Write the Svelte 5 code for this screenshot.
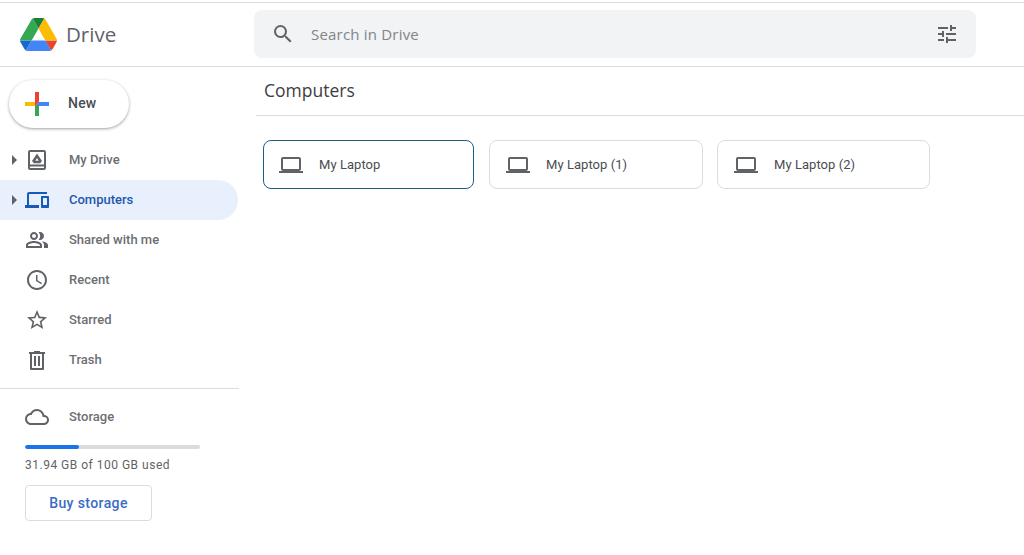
<script>
  const nav = [
    { label: 'My Drive', icon: 'drive', caret: true },
    { label: 'Computers', icon: 'computers', caret: true, active: true },
    { label: 'Shared with me', icon: 'shared' },
    { label: 'Recent', icon: 'recent' },
    { label: 'Starred', icon: 'starred' },
    { label: 'Trash', icon: 'trash' }
  ];
  const computers = ['My Laptop', 'My Laptop (1)', 'My Laptop (2)'];
</script>

<div class="page">
  <header class="header">
    <div class="brand">
      <svg class="logo" viewBox="0 0 87.3 78" width="37" height="33" aria-hidden="true">
        <path d="M6.6 66.85l3.85 6.65c.8 1.4 1.95 2.5 3.3 3.3L27.5 53H0c0 1.55.4 3.1 1.2 4.5z" fill="#1967d2"/>
        <path d="M43.65 25L29.9 1.2c-1.35.8-2.5 1.9-3.3 3.3L1.2 48.5C.4 49.9 0 51.45 0 53h27.5z" fill="#34a853"/>
        <path d="M73.55 76.8c1.35-.8 2.5-1.9 3.3-3.3l1.6-2.75 7.65-13.25c.8-1.4 1.2-2.95 1.2-4.5H59.8l5.85 11.5z" fill="#ea4335"/>
        <path d="M43.65 25L57.4 1.2C56.05.4 54.5 0 52.9 0H34.4c-1.6 0-3.15.45-4.5 1.2z" fill="#188038"/>
        <path d="M59.8 53H27.5L13.75 76.8c1.35.8 2.9 1.2 4.5 1.2h50.8c1.6 0 3.15-.45 4.5-1.2z" fill="#4285f4"/>
        <path d="M73.4 26.5L60.7 4.5c-.8-1.4-1.95-2.5-3.3-3.3L43.65 25 59.8 53h27.45c0-1.55-.4-3.1-1.2-4.5z" fill="#fbbc04"/>
      </svg>
      <span class="wordmark">Drive</span>
    </div>
    <div class="search">
      <svg class="search-icon" viewBox="0 0 24 24" width="24" height="24" aria-hidden="true">
        <path d="M15.5 14h-.79l-.28-.27A6.47 6.47 0 0 0 16 9.5 6.5 6.5 0 1 0 9.5 16c1.61 0 3.09-.59 4.23-1.57l.27.28v.79l5 4.99L20.49 19l-4.99-5zm-6 0C7.01 14 5 11.99 5 9.5S7.01 5 9.5 5 14 7.01 14 9.5 11.99 14 9.5 14z"/>
      </svg>
      <span class="placeholder">Search in Drive</span>
      <svg class="tune-icon" viewBox="0 0 24 24" width="24" height="24" aria-hidden="true">
        <path d="M3 17v2h6v-2H3zM3 5v2h10V5H3zm10 16v-2h8v-2h-8v-2h-2v6h2zM7 9v2H3v2h4v2h2V9H7zm14 4v-2H11v2h10zm-6-4h2V7h4V5h-4V3h-2v6z"/>
      </svg>
    </div>
  </header>

  <div class="body">
    <aside class="sidebar">
      <button class="new">
        <svg viewBox="0 0 36 36" width="36" height="36" aria-hidden="true">
          <path fill="#34a853" d="M16 16v14h4V20z"/>
          <path fill="#4285f4" d="M30 16H20l-4 4h14z"/>
          <path fill="#fbbc05" d="M6 16v4h10l4-4z"/>
          <path fill="#ea4335" d="M20 16V6h-4v14z"/>
        </svg>
        <span>New</span>
      </button>

      <nav class="nav">
        {#each nav as item}
          <div class="row" class:active={item.active}>
            <span class="caret" class:show={item.caret}></span>
            <svg class="nav-icon" viewBox="0 0 24 24" width="24" height="24" aria-hidden="true">
              {#if item.icon === 'drive'}
                <path d="M19 2H5a2 2 0 0 0-2 2v16a2 2 0 0 0 2 2h14a2 2 0 0 0 2-2V4a2 2 0 0 0-2-2zm0 18H5v-1.500h14V20zm0-3.500H5V4h14v12.500z"/>
                <path fill-rule="evenodd" d="M12 5.500 7 13l1.800 2.200h6.400L17 13 12 5.500zm0 4.500 1.600 2.800h-3.200L12 10z"/>
              {:else if item.icon === 'computers'}
                <path d="M4 6h18V4H4c-1.100 0-2 .9-2 2v11H0v3h14v-3H4V6zm19 2h-6c-.55 0-1 .45-1 1v10c0 .55.45 1 1 1h6c.55 0 1-.45 1-1V9c0-.55-.45-1-1-1zm-1 9h-4v-7h4v7z"/>
              {:else if item.icon === 'shared'}
                <path d="M16.670 13.130C18.040 14.060 19 15.320 19 17v3h4v-3c0-2.180-3.570-3.470-6.330-3.870zM15 12c2.210 0 4-1.790 4-4s-1.790-4-4-4c-.47 0-.91.1-1.330.24a5.980 5.980 0 0 1 0 7.520c.42.14.86.24 1.330.24zM9 12c2.210 0 4-1.790 4-4s-1.790-4-4-4-4 1.790-4 4 1.790 4 4 4zm0-6c1.100 0 2 .9 2 2s-.9 2-2 2-2-.9-2-2 .9-2 2-2zM9 13c-2.670 0-8 1.340-8 4v3h16v-3c0-2.660-5.330-4-8-4zm6 5H3v-.99C3.200 16.290 6.300 15 9 15s5.800 1.290 6 2v1z"/>
              {:else if item.icon === 'recent'}
                <path d="M11.990 2C6.470 2 2 6.480 2 12s4.470 10 9.990 10C17.520 22 22 17.520 22 12S17.520 2 11.990 2zM12 20c-4.420 0-8-3.580-8-8s3.580-8 8-8 8 3.580 8 8-3.580 8-8 8zm.5-13H11v6l5.250 3.150.75-1.230-4.500-2.670z"/>
              {:else if item.icon === 'starred'}
                <path d="M22 9.240l-7.190-.62L12 2 9.190 8.630 2 9.240l5.460 4.730L5.820 21 12 17.270 18.180 21l-1.630-7.030L22 9.240zM12 15.400l-3.760 2.270 1-4.280-3.320-2.880 4.380-.38L12 6.100l1.710 4.040 4.380.38-3.320 2.880 1 4.280L12 15.400z"/>
              {:else}
                <path d="M15 4V3H9v1H4v2h1v15a1 1 0 0 0 1 1h12a1 1 0 0 0 1-1V6h1V4h-5zm2 16H7V6h10v14zM9 8h2v10H9V8zm4 0h2v10h-2V8z"/>
              {/if}
            </svg>
            <span class="label">{item.label}</span>
          </div>
        {/each}
      </nav>

      <div class="divider"></div>

      <div class="storage">
        <div class="storage-head">
          <svg class="nav-icon" viewBox="0 0 24 24" width="24" height="24" aria-hidden="true">
            <path d="M19.350 10.040A7.490 7.490 0 0 0 12 4C9.110 4 6.600 5.640 5.350 8.040A5.994 5.994 0 0 0 0 14c0 3.310 2.690 6 6 6h13c2.760 0 5-2.240 5-5 0-2.640-2.050-4.780-4.650-4.960zM19 18H6c-2.210 0-4-1.790-4-4 0-2.050 1.530-3.760 3.560-3.970l1.070-.11.5-.95A5.469 5.469 0 0 1 12 6c2.620 0 4.880 1.860 5.390 4.430l.3 1.500 1.530.11A2.980 2.980 0 0 1 22 15c0 1.650-1.350 3-3 3z"/>
          </svg>
          <span class="label">Storage</span>
        </div>
        <div class="bar"><div class="fill" style="width: 31%"></div></div>
        <div class="used">31.94 GB of 100 GB used</div>
        <button class="buy">Buy storage</button>
      </div>
    </aside>

    <main class="main">
      <h1 class="title">Computers</h1>
      <div class="cards">
        {#each computers as name, i}
          <div class="card" class:selected={i === 0}>
            <svg viewBox="0 0 24 24" width="24" height="24" aria-hidden="true">
              <path d="M20 18c1.100 0 2-.9 2-2V6c0-1.100-.9-2-2-2H4c-1.100 0-2 .9-2 2v10c0 1.100.9 2 2 2H0v2h24v-2h-4zM4 6h16v10H4V6z"/>
            </svg>
            <span>{name}</span>
          </div>
        {/each}
      </div>
    </main>
  </div>
</div>

<style>
  :global(body) {
    margin: 0;
    background: #fff;
  }
  .page {
    height: 555px;
    width: 1024px;
    overflow: hidden;
    display: flex;
    flex-direction: column;
    padding-top: 2px;
    box-sizing: border-box;
    font-family: Roboto, "Liberation Sans", sans-serif;
    color: #5f6368;
  }
  .header {
    flex: none;
    height: 65px;
    display: flex;
    align-items: center;
    border-top: 1px solid #dadce0;
    border-bottom: 1px solid #dadce0;
    box-sizing: border-box;
    padding-bottom: 1px;
  }
  .brand {
    width: 254px;
    flex: none;
    display: flex;
    align-items: center;
    padding-left: 20px;
    box-sizing: border-box;
    gap: 9px;
  }
  .logo { display: block; }
  .wordmark {
    font-family: "Open Sans", sans-serif;
    font-size: 20.5px;
    line-height: 28px;
    color: #5f6368;
  }
  .search {
    width: 722px;
    height: 48px;
    background: #f1f3f4;
    border-radius: 8px;
    display: flex;
    align-items: center;
    padding: 0 17px;
    box-sizing: border-box;
  }
  .search svg { fill: #5f6368; flex: none; }
  .placeholder {
    flex: 1;
    margin-left: 16px;
    font-family: "Open Sans", sans-serif;
    font-size: 15px;
    letter-spacing: .2px;
    color: #80868b;
  }
  .body {
    flex: 1;
    display: flex;
    min-height: 0;
  }
  .sidebar {
    width: 239px;
    flex: none;
  }
  .new {
    margin: 13px 0 0 9px;
    width: 120px;
    height: 48px;
    border: none;
    border-radius: 24px;
    background: #fff;
    box-shadow: 0 1px 2px 0 rgba(60,64,67,.3), 0 1px 3px 1px rgba(60,64,67,.15);
    display: flex;
    align-items: center;
    padding: 0 0 0 10px;
    box-sizing: border-box;
    font-family: Roboto, sans-serif;
    font-size: 14px;
    font-weight: 500;
    letter-spacing: .2px;
    color: #4a4d51;
    gap: 13px;
  }
  .new span { padding-bottom: 2px; }
  .new svg { display: block; }
  .nav {
    margin-top: 12px;
    width: 238px;
  }
  .row {
    height: 40px;
    display: flex;
    align-items: center;
    border-radius: 0 20px 20px 0;
    font-size: 13px;
    font-weight: 500;
    color: #6b6f73;
  }
  .row.active {
    background: #e8f0fe;
    color: #2456ac;
  }
  .caret {
    width: 0;
    height: 0;
    margin-left: 12px;
    margin-right: 8px;
    border-left: 5px solid transparent;
    border-top: 5px solid transparent;
    border-bottom: 5px solid transparent;
  }
  .caret.show { border-left-color: #5f6368; }
  .nav-icon { fill: #5f6368; flex: none; display: block; }
  .row.active .nav-icon { fill: #185abc; }
  .label {
    margin-left: 20px;
    padding-bottom: 2px;
  }
  .divider {
    height: 1px;
    background: #dadce0;
    margin-top: 8px;
  }
  .storage {
    padding-left: 25px;
  }
  .storage-head {
    display: flex;
    align-items: center;
    height: 24px;
    margin-top: 16px;
    font-size: 13px;
    font-weight: 500;
    color: #6b6f73;
  }
  .bar {
    width: 175px;
    height: 4px;
    background: #dadce0;
    margin-top: 16px;
    border-radius: 2px;
    overflow: hidden;
  }
  .fill {
    height: 100%;
    background: #1a73e8;
    border-radius: 2px;
  }
  .used {
    margin-top: 8px;
    font-size: 12px;
    line-height: 16px;
    letter-spacing: .5px;
    color: #5f6368;
  }
  .buy {
    display: block;
    margin-top: 12px;
    width: 127px;
    height: 36px;
    border: 1px solid #dadce0;
    border-radius: 4px;
    background: #fff;
    box-sizing: border-box;
    font-family: Roboto, sans-serif;
    font-size: 14px;
    font-weight: 500;
    letter-spacing: .4px;
    color: #3a6cc6;
    padding: 0;
  }
  .main {
    flex: 1;
    min-width: 0;
    padding-left: 17px;
  }
  .title {
    margin: 0;
    height: 49px;
    line-height: 47px;
    padding-left: 8px;
    border-bottom: 1px solid #dadce0;
    box-sizing: border-box;
    font-family: "Open Sans", sans-serif;
    font-size: 17.5px;
    font-weight: 400;
    color: #3c4043;
  }
  .cards {
    display: flex;
    margin-top: 24px;
    padding-left: 7px;
    gap: 14px;
  }
  .card {
    width: 214px;
    height: 49px;
    border: 1px solid #dadce0;
    border-radius: 8px;
    box-sizing: border-box;
    display: flex;
    align-items: center;
    padding-left: 16px;
    font-size: 13px;
    letter-spacing: .05px;
    color: #4a4d51;
  }
  .card span { padding-bottom: 1px; }
  .card:last-child { width: 213px; }
  .card.selected {
    width: 211px;
    border-color: #1a5f8c;
    margin-right: 1px;
    padding-left: 15px;
  }
  .card svg { fill: #5f6368; margin-right: 16px; }
</style>
